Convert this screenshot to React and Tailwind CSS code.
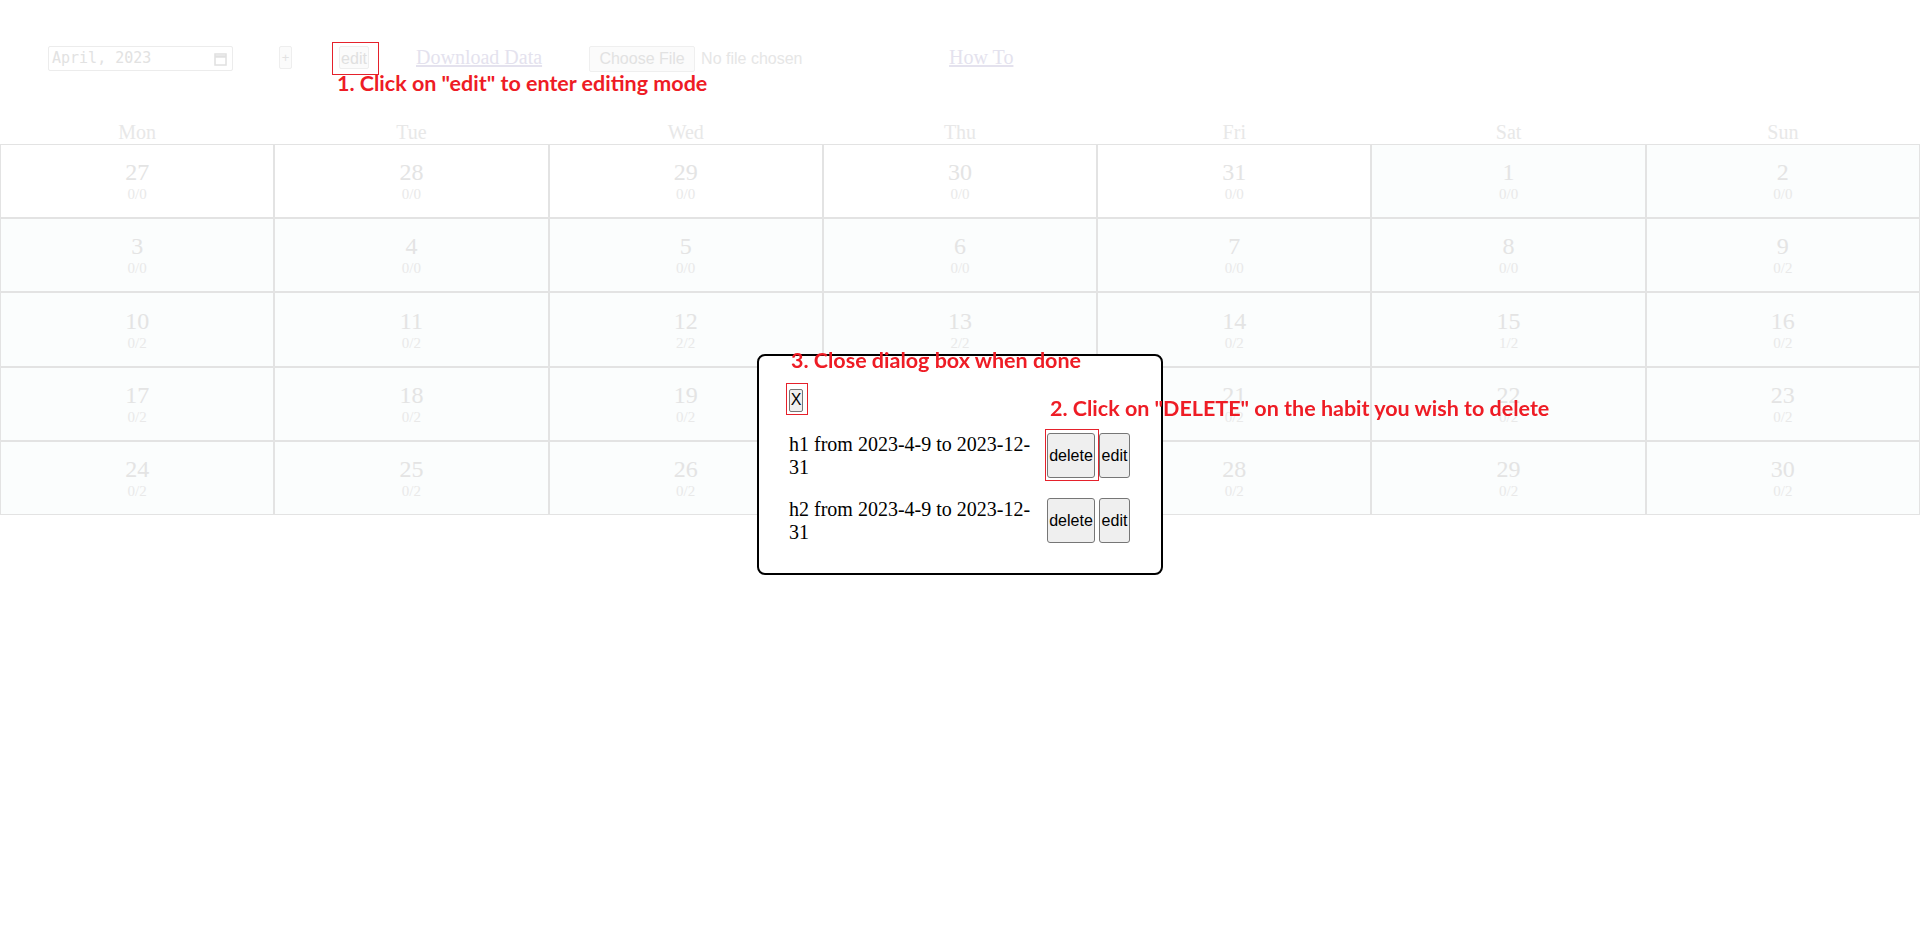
import React from 'react';

const days = ['Mon', 'Tue', 'Wed', 'Thu', 'Fri', 'Sat', 'Sun'];

// [day, score, inMonth]
const weeks = [
  [[27, '0/0', false], [28, '0/0', false], [29, '0/0', false], [30, '0/0', false], [31, '0/0', false], [1, '0/0', true], [2, '0/0', true]],
  [[3, '0/0', true], [4, '0/0', true], [5, '0/0', true], [6, '0/0', true], [7, '0/0', true], [8, '0/0', true], [9, '0/2', true]],
  [[10, '0/2', true], [11, '0/2', true], [12, '2/2', true], [13, '2/2', true], [14, '0/2', true], [15, '1/2', true], [16, '0/2', true]],
  [[17, '0/2', true], [18, '0/2', true], [19, '0/2', true], [20, '0/2', true], [21, '0/2', true], [22, '0/2', true], [23, '0/2', true]],
  [[24, '0/2', true], [25, '0/2', true], [26, '0/2', true], [27, '0/2', true], [28, '0/2', true], [29, '0/2', true], [30, '0/2', true]],
];

const rowHeights = ['h-[74px]', 'h-[74px]', 'h-[75px]', 'h-[74px]', 'h-[74px]'];

const habits = ['h1', 'h2'];

const Note = ({ className, children }) => (
  <span
    className={`absolute whitespace-nowrap text-[21.5px] leading-none font-bold text-[#ee1c25] ${className}`}
    style={{ fontFamily: 'Lato, "Open Sans", sans-serif' }}
  >
    {children}
  </span>
);

const App = () => {
  return (
    <div className="relative min-h-[929px] bg-white" style={{ fontFamily: '"Liberation Serif", serif' }}>
      {/* Toolbar */}
      <div className="flex items-start pl-[48px] pt-[46px]">
        <div className="flex items-center justify-between w-[185px] h-[25px] border border-[#ececec] rounded-[2px] pl-[3px] pr-[5px]">
          <span className="text-[15px] text-[#e2e2e2]" style={{ fontFamily: '"DejaVu Sans Mono", "Liberation Mono", monospace' }}>April, 2023</span>
          <svg width="13" height="14" viewBox="0 0 13 14" fill="none" stroke="#e0e0e0" strokeWidth="1.5">
            <rect x="1" y="2" width="11" height="11" />
            <line x1="1" y1="4.5" x2="12" y2="4.5" strokeWidth="2.5" />
          </svg>
        </div>

        <button className="ml-[46px] w-[13px] h-[23px] border border-[#eeeeee] rounded-[2px] bg-[#fbfbfb] text-[13px] text-[#e2e2e2] p-0" style={{ fontFamily: '"Liberation Sans", sans-serif' }}>
          +
        </button>

        <div className="relative ml-[47px]">
          <button className="w-[30px] h-[23px] border border-[#eeeeee] rounded-[2px] bg-[#fbfbfb] text-[16px] text-[#e0e0e0] p-0" style={{ fontFamily: '"Liberation Sans", sans-serif' }}>
            edit
          </button>
          <span className="absolute left-[-7px] top-[-4px] w-[47px] h-[33px] border border-[#e5212b]"></span>
          <Note className="left-[-2px] top-[27px]">1. Click on "edit" to enter editing mode</Note>
        </div>

        <a className="ml-[47px] text-[20px] leading-[23px] text-[#e4e2ee] underline">Download Data</a>

        <div className="ml-[47px] flex items-center w-[313px]" style={{ fontFamily: '"Liberation Sans", sans-serif' }}>
          <button className="w-[106px] h-[26px] border border-[#efefef] rounded-[2px] bg-[#fbfbfb] text-[16px] text-[#e2e2e2] p-0">
            Choose File
          </button>
          <span className="ml-[6px] text-[16px] text-[#e6e6e6]">No file chosen</span>
        </div>

        <a className="ml-[47px] text-[20px] leading-[23px] text-[#e4e2ee] underline">How To</a>
      </div>

      {/* Calendar */}
      <div className="grid grid-cols-7 mt-[49px] h-[23px]">
        {days.map((d) => (
          <div key={d} className="text-center text-[20px] leading-[23px] text-[#e8e8e8]">{d}</div>
        ))}
      </div>
      <div className="flex flex-col">
        {weeks.map((week, w) => (
          <div key={w} className="grid grid-cols-7">
            {week.map(([n, s, inMonth], i) => (
              <div
                key={i}
                className={`flex flex-col items-center justify-center ${rowHeights[w]} border border-[#e3e3e3] ${inMonth ? 'bg-[#fbfdfd]' : 'bg-white'}`}
              >
                <span className="text-[24px] leading-[27px] text-[#e4e4e4]">{n}</span>
                <span className="text-[15px] leading-[17px] text-[#e9e9e9]">{s}</span>
              </div>
            ))}
          </div>
        ))}
      </div>

      {/* Dialog */}
      <div className="fixed inset-0 flex items-center justify-center">
        <div className="relative w-[406px] bg-white border-2 border-black rounded-[8px] pt-[32px] pb-[30px] px-[30px]">
          <Note className="left-[32px] top-[-6px]">3. Close dialog box when done</Note>
          <Note className="left-[291px] top-[42px]">2. Click on "DELETE" on the habit you wish to delete</Note>

          <div className="relative w-[14px] mb-[21px]">
            <button className="w-[14px] h-[23px] border border-[#767676] rounded-[2px] bg-[#efefef] text-[16px] text-black p-0 leading-none" style={{ fontFamily: '"Liberation Sans", sans-serif' }}>
              X
            </button>
            <span className="absolute left-[-3px] top-[-5px] w-[22px] h-[32px] border border-[#e5212b]"></span>
          </div>

          <div className="flex flex-col gap-[20px]">
            {habits.map((h, idx) => (
              <div key={h} className="flex items-start h-[45px]">
                <p className="w-[252px] text-[20px] leading-[22.5px] text-black">
                  {h} from 2023-4-9 to 2023-12-31
                </p>
                <div className="relative ml-[6px]">
                  <button className="w-[48px] h-[45px] border border-[#767676] rounded-[3px] bg-[#efefef] text-[16px] text-black p-0" style={{ fontFamily: '"Liberation Sans", sans-serif' }}>
                    delete
                  </button>
                  {idx === 0 && (
                    <span className="absolute left-[-2px] top-[-4px] w-[54px] h-[52px] border border-[#e5212b]"></span>
                  )}
                </div>
                <button className="ml-[4px] w-[31px] h-[45px] border border-[#767676] rounded-[3px] bg-[#efefef] text-[16px] text-black p-0" style={{ fontFamily: '"Liberation Sans", sans-serif' }}>
                  edit
                </button>
              </div>
            ))}
          </div>
        </div>
      </div>
    </div>
  );
};

export default App;
